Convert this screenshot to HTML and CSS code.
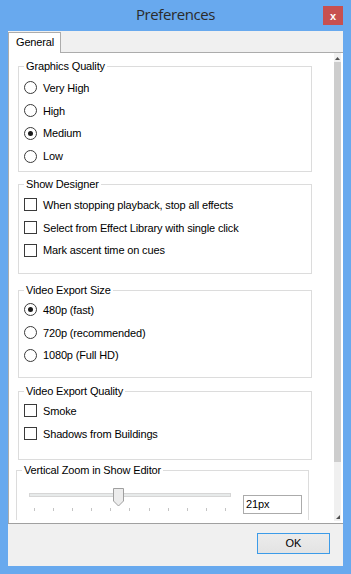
FILE: index.html
```html
<!DOCTYPE html>
<html lang="en">
<head>
<meta charset="utf-8">
<title>Preferences</title>
<link rel="stylesheet" href="styles.css">
</head>
<body>
<div class="window">
  <div class="titlebar">
    <div class="title">Preferences</div>
    <button class="close">x</button>
  </div>
  <div class="client">
    <div class="tabstrip">
      <div class="tab">General</div>
      <div class="tab-fill"></div>
    </div>
    <div class="tabpanel">
      <div class="scroll-content">
        <fieldset class="group g-quality">
          <legend>Graphics Quality</legend>
          <div class="opt"><span class="radio"></span><span>Very High</span></div>
          <div class="opt"><span class="radio"></span><span>High</span></div>
          <div class="opt"><span class="radio on"></span><span>Medium</span></div>
          <div class="opt"><span class="radio"></span><span>Low</span></div>
        </fieldset>
        <fieldset class="group g-designer">
          <legend>Show Designer</legend>
          <div class="opt"><span class="check"></span><span>When stopping playback, stop all effects</span></div>
          <div class="opt"><span class="check"></span><span>Select from Effect Library with single click</span></div>
          <div class="opt"><span class="check"></span><span>Mark ascent time on cues</span></div>
        </fieldset>
        <fieldset class="group g-size">
          <legend>Video Export Size</legend>
          <div class="opt"><span class="radio on"></span><span>480p (fast)</span></div>
          <div class="opt"><span class="radio"></span><span>720p (recommended)</span></div>
          <div class="opt"><span class="radio"></span><span>1080p (Full HD)</span></div>
        </fieldset>
        <fieldset class="group g-export">
          <legend>Video Export Quality</legend>
          <div class="opt"><span class="check"></span><span>Smoke</span></div>
          <div class="opt"><span class="check"></span><span>Shadows from Buildings</span></div>
        </fieldset>
        <fieldset class="group g-zoom">
          <legend>Vertical Zoom in Show Editor</legend>
          <div class="zoom-row">
            <div class="slider">
              <div class="track"></div>
              <svg class="thumb" width="11" height="19" viewBox="0 0 11 19"><path d="M0.5 0.5 H10.5 V13 L5.5 18 L0.5 13 Z" fill="#ececec" stroke="#9f9f9f"/></svg>
              <div class="ticks"><i></i><i></i><i></i><i></i><i></i><i></i><i></i><i></i><i></i><i></i><i></i></div>
            </div>
            <div class="textbox">21px</div>
          </div>
        </fieldset>
      </div>
      <div class="scrollbar">
        <div class="sb-up"><svg width="7" height="5" viewBox="0 0 7 5"><path d="M1 4 L3.5 1 L6 4 Z" fill="#505050"/></svg></div>
        <div class="sb-thumb"></div>
        <div class="sb-track"></div>
        <div class="sb-down"><svg width="7" height="6" viewBox="0 0 7 6"><path d="M2 5 L6 5 L6 1 Z" fill="#505050"/></svg></div>
      </div>
    </div>
    <div class="footer">
      <button class="ok">OK</button>
    </div>
  </div>
</div>
</body>
</html>
```
FILE: styles.css
```css
* { box-sizing: border-box; }
html, body { margin: 0; padding: 0; }
body {
  width: 351px;
  height: 574px;
  overflow: hidden;
  font-family: "Liberation Sans", Arial, sans-serif;
  font-size: 11px;
  letter-spacing: -0.15px;
  color: #000;
}
.window {
  width: 351px;
  height: 574px;
  background: #68a9ee;
  display: flex;
  flex-direction: column;
}
.titlebar {
  height: 31px;
  flex: none;
  display: grid;
  grid-template-columns: 1fr auto 1fr;
  align-items: start;
}
.title {
  grid-column: 2;
  font-family: "Open Sans", "Noto Sans", sans-serif;
  font-size: 15px;
  letter-spacing: -0.4px;
  line-height: 29px;
  color: #2b2b2b;
}
.close {
  grid-column: 3;
  justify-self: end;
  margin: 6px 8px 0 0;
  width: 20px;
  height: 19px;
  padding: 0;
  border: 0;
  background: #c75050;
  color: #fff;
  font: bold 11px/18px "Liberation Sans", sans-serif;
}
.client {
  flex: 1;
  min-height: 0;
  margin: 0 8px 8px 8px;
  background: #f0f0f0;
  display: flex;
  flex-direction: column;
}
.tabstrip {
  height: 22px;
  flex: none;
  display: flex;
  align-items: flex-end;
}
.tab {
  width: 53px;
  height: 21px;
  padding: 3px 0 0 7px;
  background: #fff;
  border: 1px solid #acacac;
  border-bottom: 0;
  line-height: 13px;
}
.tab-fill {
  flex: 1;
  height: 1px;
  background: #acacac;
}
.tabpanel {
  flex: 1;
  min-height: 0;
  display: flex;
  background: #fff;
  border-left: 1px solid #acacac;
  padding-bottom: 2px;
}
.scroll-content {
  flex: 1;
  overflow: hidden;
  margin-bottom: 1px;
}
.group {
  margin: 0 0 0 9px;
  width: 294px;
  min-width: 0;
  border: 1px solid #dcdcdc;
  padding: 0 0 0 5px;
}
.group legend {
  padding: 0 2px;
  line-height: 13px;
}
.g-quality { margin-top: 7px; padding-top: 3.65px; padding-bottom: 3.55px; }
.g-designer { margin-top: 6px; padding-top: 2.65px; padding-bottom: 11.25px; }
.g-size { margin-top: 10px; padding-top: 1.65px; padding-bottom: 10.25px; }
.g-export { margin-top: 7px; padding-top: 1.65px; padding-bottom: 13.95px; }
.g-zoom {
  margin: 4px 0 0 7px;
  width: 293px;
  padding-top: 11px;
  padding-bottom: 30px;
}
.opt {
  height: 22.7px;
  display: flex;
  align-items: center;
  gap: 6px;
  white-space: nowrap;
}
.radio {
  flex: none;
  width: 13px;
  height: 13px;
  border: 1px solid #3a3a3a;
  border-radius: 50%;
  background: #fff;
  display: flex;
  align-items: center;
  justify-content: center;
}
.radio.on::after {
  content: "";
  width: 5px;
  height: 5px;
  border-radius: 50%;
  background: #1a1a1a;
}
.check {
  flex: none;
  width: 13px;
  height: 13px;
  border: 1px solid #3a3a3a;
  background: #fff;
}
.zoom-row {
  display: flex;
  align-items: flex-start;
}
.slider {
  position: relative;
  width: 206px;
  margin-left: 5px;
  padding-top: 5px;
}
.track {
  height: 4px;
  margin: 0 2px;
  background: #e7eaea;
  border: 1px solid #d6d6d6;
}
.thumb {
  position: absolute;
  left: 86px;
  top: 0;
  display: block;
}
.ticks {
  margin-top: 11px;
  padding: 0 7px;
  height: 3px;
  display: flex;
  justify-content: space-between;
}
.ticks i {
  width: 1px;
  height: 3px;
  background: #c4c4c4;
}
.textbox {
  margin: 7px 0 0 10px;
  width: 59px;
  height: 19px;
  border: 1px solid #ababab;
  background: #fff;
  padding-left: 2px;
  line-height: 17px;
}
.scrollbar {
  width: 9px;
  padding-right: 2px;
  display: flex;
  flex-direction: column;
}
.sb-up {
  height: 9px;
  background: #f0f0f0;
  display: flex;
  align-items: flex-end;
  justify-content: center;
  padding-bottom: 1px;
}
.sb-up svg, .sb-down svg { display: block; }
.sb-thumb {
  height: 400px;
  background: #cdcdcd;
}
.sb-track {
  flex: 1;
  background: #f0f0f0;
}
.sb-down {
  height: 7px;
  background: #f0f0f0;
}
.footer {
  height: 43px;
  flex: none;
  border-top: 1px solid #a0a0a0;
  display: flex;
  justify-content: flex-end;
  align-items: flex-start;
  padding: 9px 13px 0 0;
}
.ok {
  width: 73px;
  height: 21px;
  padding: 0;
  border: 1px solid #3c9be8;
  background: linear-gradient(#ececec, #e3e3e3);
  font: 11px/19px "Liberation Sans", Arial, sans-serif;
  color: #000;
}
```
